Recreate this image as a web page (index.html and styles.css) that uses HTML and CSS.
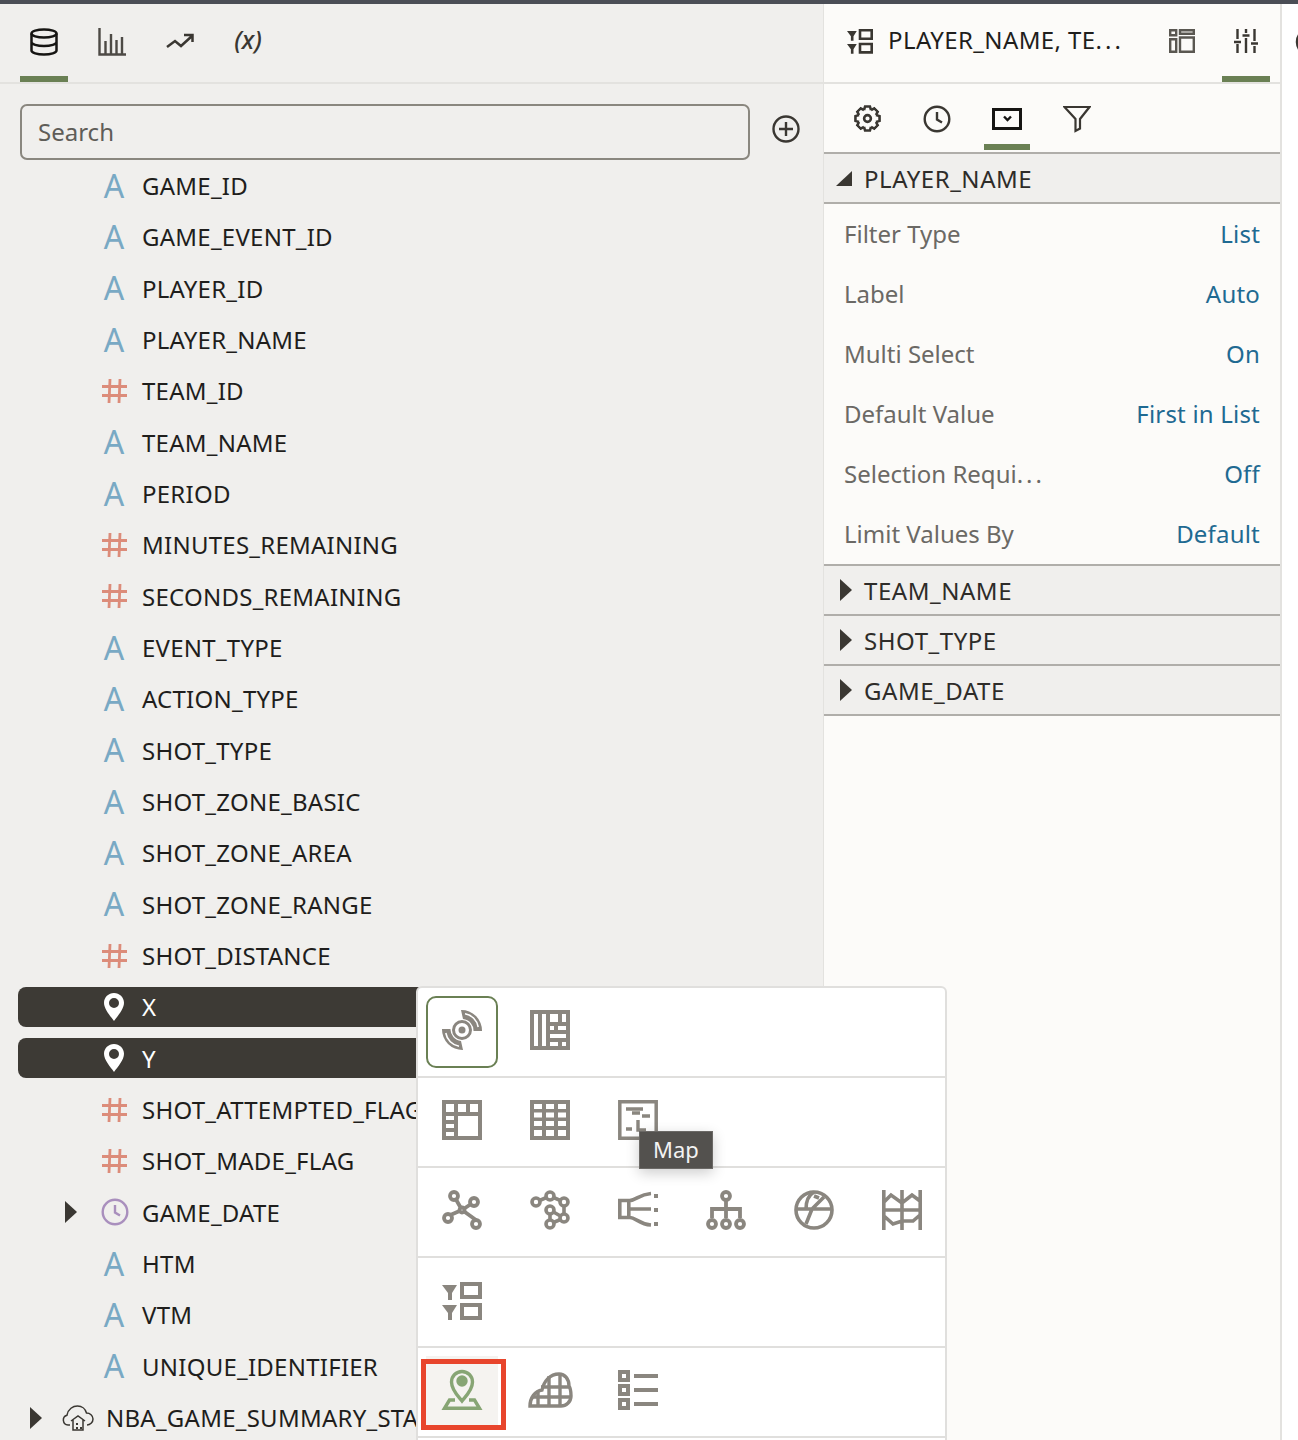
FILE: index.html
```html
<!DOCTYPE html>
<html lang="en">
<head>
  <meta charset="UTF-8">
  <title>Data panel</title>
  <link rel="stylesheet" href="styles.css">
</head>
<body>
  <svg class="defs" width="0" height="0">
    <symbol id="pin" viewBox="0 0 20 28"><path fill-rule="evenodd" d="M10 0C4.5 0 0 4.3 0 9.800 0 16 6 22.500 10 28c4-5.500 10-12 10-18.200C20 4.300 15.500 0 10 0zm0 5a5 5 0 1 1 0 10 5 5 0 0 1 0-10z"/></symbol>
    <symbol id="clock" viewBox="0 0 28 28"><circle cx="14" cy="14" r="12.300" fill="none" stroke="currentColor" stroke-width="2.400"/><path d="M14 7v7.500l5 3" fill="none" stroke="currentColor" stroke-width="2.400"/></symbol>
    <symbol id="filtergrid" viewBox="0 0 40 40" fill="currentColor"><path d="M0 3h15l-5 8v7H6v-7zM0 23h15l-5 8v7H6v-7z"/><path fill-rule="evenodd" d="M18 0h22v17H18zm4 4v9h14V4zM18 21h22v17H18zm4 4v9h14v-9z"/></symbol>
    <symbol id="twist" viewBox="0 0 12 22"><path d="M0 0l12 11L0 22z" fill="#3a3732"/></symbol>
    <symbol id="hash" viewBox="0 0 25 24"><path d="M8 0L7 24M18 0L17 24M0 7.500h25M0 16.500h25" fill="none" stroke="#dc8c7a" stroke-width="2.800"/></symbol>
    <symbol id="tooth" viewBox="0 0 28 28"><path d="M10.360 5.220L11.500 1.500H16.500L17.640 5.220" fill="none" stroke="#3a3732" stroke-width="2.700"/></symbol>
  </svg>

  <div class="topbar"></div>

  <div class="app">
    <section class="left">
      <nav class="tabs">
        <div class="tab active">
          <svg class="ic" viewBox="0 0 28 28" fill="none" stroke="#161513" stroke-width="2.500"><ellipse cx="14" cy="5.500" rx="12.500" ry="4"/><path d="M1.500 5.500v17c0 2.200 5.600 4 12.500 4s12.500-1.800 12.500-4v-17M1.500 14c0 2.200 5.600 4 12.500 4s12.500-1.800 12.500-4"/></svg>
        </div>
        <div class="tab">
          <svg class="ic" viewBox="0 0 28 28" fill="none" stroke="#4d4a45" stroke-width="2.400"><path d="M1.500 0v26.500H28M7.500 26V13M13 26V6M18.500 26V12M24 26V9"/></svg>
        </div>
        <div class="tab">
          <svg class="ic" viewBox="0 0 28 28" fill="none" stroke="#3a3732" stroke-width="2.500"><path d="M1 19l8-6 6 5L26 8M18 7h8.500v7"/></svg>
        </div>
        <div class="tab fx">(x)</div>
      </nav>

      <div class="searchrow">
        <div class="search">Search</div>
        <svg class="addbtn" viewBox="0 0 28 28" fill="none" stroke="#3a3732" stroke-width="2.400"><circle cx="14" cy="14" r="12.500"/><path d="M14 7v14M7 14h14"/></svg>
      </div>

      <div class="fields">
        <div class="row"><span class="glyph attr">A</span><span>GAME_ID</span></div>
        <div class="row"><span class="glyph attr">A</span><span>GAME_EVENT_ID</span></div>
        <div class="row"><span class="glyph attr">A</span><span>PLAYER_ID</span></div>
        <div class="row"><span class="glyph attr">A</span><span>PLAYER_NAME</span></div>
        <div class="row"><svg class="hash"><use href="#hash"/></svg><span>TEAM_ID</span></div>
        <div class="row"><span class="glyph attr">A</span><span>TEAM_NAME</span></div>
        <div class="row"><span class="glyph attr">A</span><span>PERIOD</span></div>
        <div class="row"><svg class="hash"><use href="#hash"/></svg><span>MINUTES_REMAINING</span></div>
        <div class="row"><svg class="hash"><use href="#hash"/></svg><span>SECONDS_REMAINING</span></div>
        <div class="row"><span class="glyph attr">A</span><span>EVENT_TYPE</span></div>
        <div class="row"><span class="glyph attr">A</span><span>ACTION_TYPE</span></div>
        <div class="row"><span class="glyph attr">A</span><span>SHOT_TYPE</span></div>
        <div class="row"><span class="glyph attr">A</span><span>SHOT_ZONE_BASIC</span></div>
        <div class="row"><span class="glyph attr">A</span><span>SHOT_ZONE_AREA</span></div>
        <div class="row"><span class="glyph attr">A</span><span>SHOT_ZONE_RANGE</span></div>
        <div class="row"><svg class="hash"><use href="#hash"/></svg><span>SHOT_DISTANCE</span></div>
        <div class="row selected"><svg class="pin"><use href="#pin"/></svg><span>X</span></div>
        <div class="row selected"><svg class="pin"><use href="#pin"/></svg><span>Y</span></div>
        <div class="row"><svg class="hash"><use href="#hash"/></svg><span>SHOT_ATTEMPTED_FLAG</span></div>
        <div class="row"><svg class="hash"><use href="#hash"/></svg><span>SHOT_MADE_FLAG</span></div>
        <div class="row expandable"><svg class="twist"><use href="#twist"/></svg><svg class="dateic"><use href="#clock"/></svg><span>GAME_DATE</span></div>
        <div class="row"><span class="glyph attr">A</span><span>HTM</span></div>
        <div class="row"><span class="glyph attr">A</span><span>VTM</span></div>
        <div class="row"><span class="glyph attr">A</span><span>UNIQUE_IDENTIFIER</span></div>
        <div class="row source">
          <svg class="twist"><use href="#twist"/></svg>
          <svg class="cloud" viewBox="0 0 32 26" fill="none" stroke="#3a3732" stroke-width="1.500"><path d="M8 20H6a5 5 0 0 1-1-9.800C6 4 11 1 15.500 1c4.500 0 8 3 9 7 3.500 0 6.500 2.500 6.500 6s-3 6-6 6"/><path d="M9 16l7-5 7 5M11 15v10h10V15" /><path d="M14 18h2v2h-2zM14 22h2v2h-2zM18 22h2v2h-2z" fill="#3a3732" stroke="none"/></svg>
          <span>NBA_GAME_SUMMARY_STATS</span>
        </div>
      </div>
    </section>

    <section class="right">
      <header class="righthead">
        <svg class="headfilter"><use href="#filtergrid"/></svg>
        <span class="headtitle">PLAYER_NAME, TE<span class="dots">...</span></span>
        <svg class="headlayout" viewBox="0 0 26 24" fill="none" stroke="#5a5751" stroke-width="2.400"><path d="M1.200 1.200h6v5h-6zM1.200 10.200h6v12.600h-6zM11 1.200h13.800v3.600H11zM11 8.500h13.800v14.300H11z"/></svg>
        <div class="tab active headsliders">
          <svg class="sliders" viewBox="0 0 24 24" fill="none" stroke="#3a3732" stroke-width="2.400"><path d="M3.500 0v10M3.500 15v9M12 0v4M12 9v15M20.500 0v12M20.500 17v7M0 13h7M8.500 6.500h7M17 14.500h7"/></svg>
        </div>
      </header>

      <nav class="subtabs">
        <div class="subtab">
          <svg class="gear" viewBox="0 0 28 28" fill="none" stroke="#3a3732" stroke-width="2.700">
            <circle cx="14" cy="14" r="3.500"/>
            <g>
              <use href="#tooth" width="28" height="28"/>
              <use href="#tooth" width="28" height="28" transform="rotate(45 14 14)"/>
              <use href="#tooth" width="28" height="28" transform="rotate(90 14 14)"/>
              <use href="#tooth" width="28" height="28" transform="rotate(135 14 14)"/>
              <use href="#tooth" width="28" height="28" transform="rotate(180 14 14)"/>
              <use href="#tooth" width="28" height="28" transform="rotate(225 14 14)"/>
              <use href="#tooth" width="28" height="28" transform="rotate(270 14 14)"/>
              <use href="#tooth" width="28" height="28" transform="rotate(315 14 14)"/>
            </g>
          </svg>
        </div>
        <div class="subtab"><svg class="ic clockic"><use href="#clock"/></svg></div>
        <div class="subtab active">
          <svg class="boxic" viewBox="0 0 30 22" fill="none" stroke="#161513"><path d="M1.500 1.500h27v19h-27z" stroke-width="3"/><path d="M15 8.500l3.500 3.500 3.500-3.500" transform="translate(-3 0)" stroke-width="2.400"/></svg>
        </div>
        <div class="subtab">
          <svg class="ic" viewBox="0 0 28 28" fill="none" stroke="#3a3732" stroke-width="2.200"><path d="M1.500 2h25L17 14v9.500L12.500 26V14z"/></svg>
        </div>
      </nav>

      <div class="section">
        <svg class="corner" viewBox="0 0 16 15"><path d="M16 0v15H0z" fill="#3a3732"/></svg>
        <span>PLAYER_NAME</span>
      </div>
      <div class="prop"><span>Filter Type</span><a>List</a></div>
      <div class="prop"><span>Label</span><a>Auto</a></div>
      <div class="prop"><span>Multi Select</span><a>On</a></div>
      <div class="prop"><span>Default Value</span><a>First in List</a></div>
      <div class="prop"><span>Selection Requi<span class="dots">...</span></span><a>Off</a></div>
      <div class="prop"><span>Limit Values By</span><a>Default</a></div>
      <div class="section closed"><svg class="twist"><use href="#twist"/></svg><span>TEAM_NAME</span></div>
      <div class="section closed"><svg class="twist"><use href="#twist"/></svg><span>SHOT_TYPE</span></div>
      <div class="section closed"><svg class="twist"><use href="#twist"/></svg><span>GAME_DATE</span></div>
    </section>

    <div class="edge">
      <svg class="edgeic" viewBox="0 0 12 28" fill="none" stroke="#3a3732" stroke-width="2.400"><path d="M12 2A12 12 0 0 0 3 14a12 12 0 0 0 9 12"/></svg>
    </div>
  </div>

  <!-- chart type picker -->
  <div class="picker">
    <div class="pickrow">
      <div class="cell current">
        <svg class="chart" viewBox="0 0 40 40"><g fill="#8a867f"><circle cx="20" cy="20" r="3.500"/><path d="M19 0A20.500 20.500 0 0 1 40 21H31.500A11.500 11.500 0 0 0 21 9zM21 40A20.500 20.500 0 0 1 0 19H8.500A11.500 11.500 0 0 0 19 31z"/></g><circle cx="20" cy="20" r="8.500" fill="none" stroke="#8a867f" stroke-width="3"/><path d="M23 3.800A16 16 0 0 1 36.200 17M17 36.200A16 16 0 0 1 3.800 23" fill="none" stroke="#fff" stroke-width="1.600"/></svg>
      </div>
      <div class="cell">
        <svg class="chart" viewBox="0 0 40 40"><rect width="40" height="40" fill="#8a867f"/><path fill="#fff" d="M4 4h4v32H4zM12 4h4v32h-4zM20 4h8v8h-8zM32 4h4v8h-4zM20 16h4v4h-4zM28 16h8v4h-8zM20 24h16v4H20zM20 32h8v4h-8zM32 32h4v4h-4z"/></svg>
      </div>
    </div>
    <div class="pickrow">
      <div class="cell">
        <svg class="chart" viewBox="0 0 40 40"><rect width="40" height="40" fill="#8a867f"/><path fill="#fff" d="M4 4h8v8H4zM16 4h8v8h-8zM28 4h8v8h-8zM4 16h8v4H4zM4 24h8v4H4zM4 32h8v4H4zM16 16h20v20H16z"/></svg>
      </div>
      <div class="cell">
        <svg class="chart" viewBox="0 0 40 40"><rect width="40" height="40" fill="#8a867f"/><path fill="#fff" d="M4 4h8v5H4zM16 4h8v5h-8zM28 4h8v5h-8zM4 12.500h8v5H4zM16 12.500h8v5h-8zM28 12.500h8v5h-8zM4 21h8v5H4zM16 21h8v5h-8zM28 21h8v5h-8zM4 30h8v6H4zM16 30h8v6h-8zM28 30h8v6h-8z"/></svg>
      </div>
      <div class="cell">
        <svg class="chart" viewBox="0 0 40 40" fill="none" stroke="#8a867f" stroke-width="3.500"><path d="M1.800 1.800h36.400v36.400H1.800z"/><path d="M8 9h17M14 13h8M24 16h8M8 29h6M20 20v10h8" stroke-width="3.400"/></svg>
      </div>
    </div>
    <div class="pickrow">
      <div class="cell">
        <svg class="chart" viewBox="0 0 40 40" fill="#fff" stroke="#8a867f" stroke-width="3.800"><path d="M12 6l8 14 12-8M6 26l14-6 14 10" fill="none"/><circle cx="12" cy="6" r="4"/><circle cx="32" cy="12" r="4"/><circle cx="6" cy="28" r="4"/><circle cx="34" cy="34" r="4"/><circle cx="20" cy="20" r="2.500"/></svg>
      </div>
      <div class="cell">
        <svg class="chart" viewBox="0 0 40 40" fill="#fff" stroke="#8a867f" stroke-width="3.600"><path d="M6 12l14-6 14 6v16l-14 6V20l14 8" fill="none"/><circle cx="6" cy="12" r="4"/><circle cx="20" cy="6" r="4"/><circle cx="34" cy="12" r="4"/><circle cx="20" cy="20" r="4"/><circle cx="34" cy="28" r="4"/><circle cx="20" cy="34" r="4"/></svg>
      </div>
      <div class="cell">
        <svg class="chart" viewBox="0 0 40 40" fill="none" stroke="#8a867f" stroke-width="3.600"><path d="M1.800 10.500h9v17h-9zM10 11C20 10 20 4.500 33 3.500M10 19h23M10 27c10 1 10 7 23 8"/><path d="M38 4v4M38 18v4M38 32v4" stroke-width="4"/></svg>
      </div>
      <div class="cell">
        <svg class="chart" viewBox="0 0 40 40" fill="#fff" stroke="#8a867f" stroke-width="3.800"><path d="M20 10v18M6 28v-9h28v9" fill="none"/><circle cx="20" cy="6" r="4"/><circle cx="6" cy="34" r="4"/><circle cx="20" cy="34" r="4"/><circle cx="34" cy="34" r="4"/></svg>
      </div>
      <div class="cell">
        <svg class="chart" viewBox="0 0 40 40" fill="none" stroke="#8a867f" stroke-width="3.600"><circle cx="20" cy="20" r="18"/><path d="M2 19h36M30 7L18 19l-6 15M20 2c-5 3-8 8-8 17M20 6l5 2"/></svg>
      </div>
      <div class="cell">
        <svg class="chart" viewBox="0 0 40 40" fill="none" stroke="#8a867f" stroke-width="3.600"><path d="M1.800 0v40M20 0v40M38.200 0v40M2 20h36M2 12l7-7 11 8 10-8 8 6M2 26l9 8 9-3h11l7-6"/></svg>
      </div>
    </div>
    <div class="pickrow">
      <div class="cell"><svg class="chart filtergray"><use href="#filtergrid"/></svg></div>
    </div>
    <div class="pickrow">
      <div class="cell picked">
        <svg class="chart" viewBox="0 0 40 40" fill="none" stroke="#87a574" stroke-width="3.400"><path d="M20 31c-4-5-10.500-11-10.500-19a10.500 10.500 0 0 1 21 0c0 8-6.500 14-10.500 19z"/><circle cx="20" cy="11" r="4"/><circle cx="20" cy="11" r="1.500" fill="#87a574"/><path d="M13 30H7.500l-5 8.300h35l-5-8.300H27"/></svg>
      </div>
      <div class="cell">
        <svg class="chart cloudgrid" viewBox="0 0 44 40" fill="none" stroke="#8a867f" stroke-width="3.400"><path d="M2 36C2 28 7 21 14 20 16 11 22 4 31 4 37 4 41 9 41 16 43 19 43 22 43 26 43 32 38 36 33 36z"/><path d="M10 21V36M21 6V36M32 5V36M13 17H41M4 27H43"/></svg>
      </div>
      <div class="cell">
        <svg class="chart" viewBox="0 0 40 40" fill="none" stroke="#8a867f" stroke-width="4"><path d="M2 2h8v8H2zM2 16h8v8H2zM2 30h8v8H2zM16 6h24M16 20h24M16 34h24"/></svg>
      </div>
    </div>
    <div class="redbox"></div>
    <div class="tooltip">Map</div>
  </div>
</body>
</html>
```

FILE: styles.css
```css
body {
  margin: 0;
  width: 1298px;
  height: 1440px;
  overflow: hidden;
  position: relative;
  background: #fff;
  font-family: "Noto Sans", sans-serif;
  font-size: 24px;
  color: #1f1e1c;
}
.defs {
  position: absolute;
}
.topbar {
  height: 4px;
  background: #4b4e56;
}
.app {
  display: flex;
  height: 1436px;
}
.dots {
  letter-spacing: 3px;
}

/* left panel */
.left {
  width: 823px;
  flex: none;
  background: #f0efed;
  border-right: 1px solid #e3e2df;
}
.tabs {
  display: flex;
  gap: 20px;
  height: 78px;
  padding-left: 20px;
  border-bottom: 2px solid #e3e2df;
}
.tab {
  width: 48px;
  height: 78px;
  display: flex;
  justify-content: center;
  padding-top: 24px;
  box-sizing: border-box;
}
.tab.active {
  border-bottom: 6px solid #6a8054;
}
.ic {
  width: 28px;
  height: 28px;
}
.fx {
  font-style: italic;
  font-weight: 500;
  font-size: 25px;
  color: #3a3732;
  padding-top: 18px;
}
.searchrow {
  display: flex;
  align-items: center;
  padding: 20px 0 0 20px;
}
.search {
  width: 730px;
  height: 56px;
  box-sizing: border-box;
  border: 2px solid #8a877f;
  border-radius: 7px;
  padding-left: 16px;
  line-height: 52px;
  color: #5f5d58;
}
.addbtn {
  width: 28px;
  height: 28px;
  margin: -6px 0 0 22px;
}
.fields {
  display: grid;
  grid-auto-rows: 51.33px;
  padding: 0 0 0 18px;
  letter-spacing: 0.25px;
}
.row {
  display: flex;
  align-items: center;
  align-self: center;
  height: 40px;
  padding-left: 84px;
  white-space: nowrap;
}
.row.selected {
  background: #3d3a35;
  border-radius: 8px;
  color: #fff;
  fill: #fff;
}
.glyph {
  width: 24px;
  margin-right: 16px;
  text-align: center;
  line-height: 40px;
}
.attr {
  font-size: 32px;
  color: #79a9c4;
}
.hash {
  width: 25px;
  height: 24px;
  margin-right: 15px;
  flex: none;
}
.pin {
  width: 20px;
  height: 28px;
  margin: 0 18px 0 2px;
}
.twist {
  width: 12px;
  height: 22px;
  flex: none;
}
.expandable {
  padding-left: 47px;
}
.dateic {
  width: 28px;
  height: 28px;
  margin: 0 13px 0 24px;
  color: #a98fbd;
}
.source {
  padding-left: 12px;
}
.cloud {
  width: 32px;
  height: 26px;
  margin: 0 12px 0 20px;
}

/* right panel */
.right {
  width: 456px;
  flex: none;
  background: #fcfbf9;
  border-right: 2px solid #e3e2df;
}
.righthead {
  display: flex;
  height: 78px;
  padding-left: 22px;
  border-bottom: 2px solid #e3e2df;
}
.headfilter {
  width: 28px;
  height: 26px;
  margin: 25px 14px 0 0;
  color: #3a3732;
}
.headtitle {
  width: 281px;
  line-height: 72px;
  letter-spacing: 0.4px;
  white-space: nowrap;
}
.headlayout {
  width: 26px;
  height: 24px;
  margin-top: 25px;
}
.headsliders {
  margin-left: 27px;
}
.sliders {
  width: 24px;
  height: 24px;
  margin-top: 1px;
}
.subtabs {
  display: flex;
  gap: 24px;
  height: 66px;
  padding: 0 0 2px 20px;
}
.subtab {
  width: 46px;
  height: 66px;
  box-sizing: border-box;
  display: flex;
  justify-content: center;
  padding-top: 21px;
}
.subtab.active {
  border-bottom: 6px solid #6a8054;
}
.gear {
  width: 27px;
  height: 27px;
}
.clockic {
  color: #3a3732;
}
.boxic {
  width: 30px;
  height: 22px;
  margin-top: 3px;
}
.section {
  display: flex;
  align-items: center;
  height: 48px;
  padding-left: 12px;
  background: #f0efed;
  border-bottom: 2px solid #b0aeaa;
  color: #2e2c29;
  letter-spacing: 0.55px;
}
.subtabs + .section,
.prop + .section {
  border-top: 2px solid #b0aeaa;
}
.corner {
  width: 16px;
  height: 15px;
  margin-right: 12px;
}
.closed {
  padding-left: 16px;
}
.closed .twist {
  margin-right: 12px;
}
.prop {
  display: flex;
  justify-content: space-between;
  align-items: center;
  height: 58px;
  padding: 0 20px 2px;
  color: #6b6965;
}
.prop a {
  color: #1f6a92;
  letter-spacing: 0.2px;
}
.edge {
  flex: 1;
}
.edgeic {
  width: 12px;
  height: 28px;
  margin: 24px 0 0 12px;
  display: block;
}

/* chart type picker */
.picker {
  position: absolute;
  left: 416px;
  top: 986px;
  width: 531px;
  height: 470px;
  box-sizing: border-box;
  background: #fff;
  border: 2px solid #e0dfdd;
  border-radius: 6px 6px 0 0;
  z-index: 2;
}
.pickrow {
  display: flex;
  gap: 16px;
  height: 90px;
  padding: 8px 0 0 8px;
  box-sizing: border-box;
  border-bottom: 2px solid #e0dfdd;
}
.cell {
  width: 72px;
  height: 72px;
  box-sizing: border-box;
  display: flex;
  justify-content: center;
  padding-top: 14px;
}
.chart {
  width: 40px;
  height: 40px;
  overflow: visible;
  flex: none;
}
.cloudgrid {
  width: 44px;
}
.current {
  border: 2px solid #6a8054;
  border-radius: 10px;
  padding-top: 12px;
}
.picked {
  background: #f5f3f0;
}
.filtergray {
  color: #8a867f;
  margin-top: 2px;
}
.redbox {
  position: absolute;
  left: 3px;
  top: 371px;
  width: 85px;
  height: 71px;
  box-sizing: border-box;
  border: 5px solid #e8452c;
}
.tooltip {
  position: absolute;
  left: 221px;
  top: 143px;
  width: 74px;
  height: 38px;
  box-sizing: border-box;
  background: #53514e;
  border: 1px solid #6b6966;
  box-shadow: 0 4px 14px rgba(0, 0, 0, 0.2);
  color: #f3f3f3;
  font-size: 22px;
  line-height: 35px;
  text-align: center;
}
```
